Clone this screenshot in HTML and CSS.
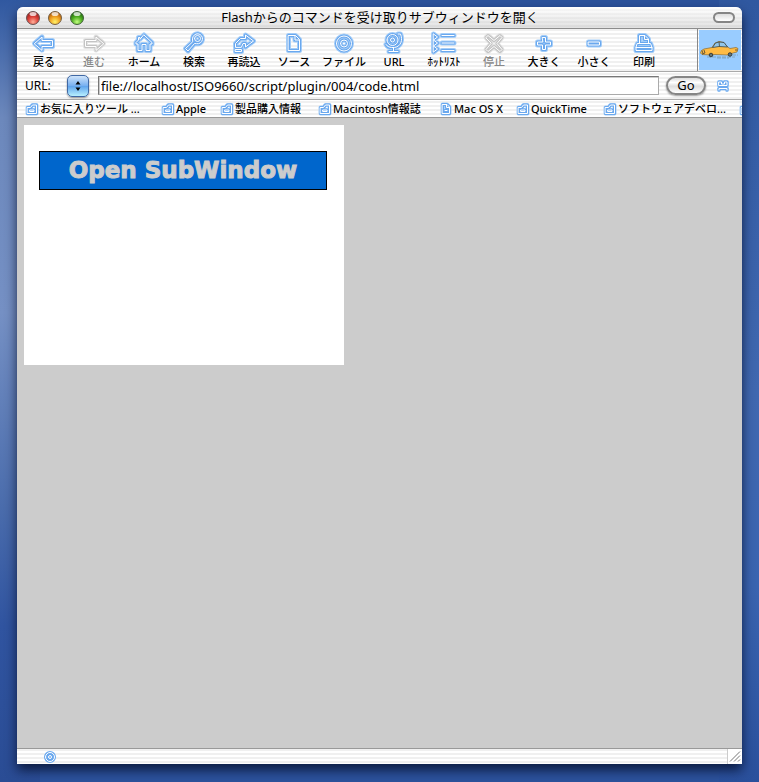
FILE: index.html
```html
<!DOCTYPE html>
<html lang="ja">
<head>
<meta charset="utf-8">
<title>Flashからのコマンドを受け取りサブウィンドウを開く</title>
<link rel="stylesheet" href="styles.css">
</head>
<body>
<svg class="defs" aria-hidden="true">
  <defs>
    <path id="s-back" d="M2.500 11.500L10 5V8.500H20.500V14.500H10V18Z"/>
    <path id="s-forward" d="M21.500 11.500L14 5V8.500H3.500V14.500H14V18Z"/>
    <path id="s-home" d="M12 3L20 10.500V12H18V18.500H14V12.500H10V18.500H6V12H4V10.500L6.500 8V5.500H8V7Z"/>
    <path id="s-search" d="M10.500 6.500a5 5 0 1 1 4 5.200L12.500 11.500L6 19L3.500 16.500L10.500 10ZM12.500 6.500a3 3 0 1 0 6 0a3 3 0 1 0-6 0"/>
    <path id="s-reload" d="M3.500 15V11.500L8.500 6.500H13.500V3L21.500 9L13.500 15V11.500H11L9.500 15ZM3.500 17.500H9.500V19.500H3.500Z"/>
    <path id="s-source" d="M6.500 3.500H13.500L17.500 7.500V18.500H6.500ZM13 3.500V8H17.500"/>
    <path id="s-target" d="M4.500 11.500a7.500 7.500 0 1 0 15 0a7.500 7.500 0 1 0-15 0M8.500 11.500a3.500 3.500 0 1 0 7 0a3.500 3.500 0 1 0-7 0"/>
    <path id="s-globe" d="M5 8a5.500 5.500 0 1 0 11 0a5.500 5.500 0 1 0-11 0M8.500 8a2 2 0 1 0 4 0a2 2 0 1 0-4 0M16 2H18.500C21 8 19 14.500 12.500 15.500C8 16 5 14.500 4 12.500M11.500 16V19M7 19.500H16"/>
    <path id="s-list" d="M1.500 2L5.500 5L1.500 8L5.500 11L1.500 14L5.500 17L1.500 20ZM10 3.500H22M10 11H22M10 18.500H22"/>
    <path id="s-stop" d="M4 5.500L6 3.500L12 8.500L18 3.500L20 5.500L15 11.500L20 17.500L18 19.500L12 14.500L6 19.500L4 17.500L9 11.500Z"/>
    <path id="s-plus" d="M10.500 5.500H13.500V10H18.500V13H13.500V17.500H10.500V13H5.500V10H10.500Z"/>
    <path id="s-minus" d="M6.500 10H17.500V13H6.500Z"/>
    <path id="s-print" d="M7.500 11.500V3.500H13L16.500 7V11.500M12.500 4V7.500H16.500M5.500 11.500H18.500L20 15.500V18.500H4V15.500ZM4 15.500H20"/>
    <path id="s-folder" d="M1.500 4.500H4.500L6.500 2H10.500V10.500H1.500ZM4 7H8V8.500H4Z"/>
    <path id="s-page" d="M2.500 1.500H7L9.500 4V10.500H2.500ZM6.500 2V4.500H9M5 7.500H7"/>
    <path id="s-ring" d="M1.500 6a4.500 4.500 0 1 0 9 0a4.500 4.500 0 1 0-9 0M4.500 6a1.500 1.500 0 1 0 3 0a1.500 1.500 0 1 0-3 0"/>
    <path id="s-knot" d="M2 2H4.500V4H7.500V2H10V5.500H2ZM2 10V8.500H10V10"/>
    <radialGradient id="g-red" cx=".5" cy=".8" r=".8"><stop offset="0" stop-color="#ffb09a"/><stop offset=".5" stop-color="#dc4038"/><stop offset="1" stop-color="#8a1818"/></radialGradient>
    <radialGradient id="g-amber" cx=".5" cy=".8" r=".8"><stop offset="0" stop-color="#fff36a"/><stop offset=".5" stop-color="#f0a020"/><stop offset="1" stop-color="#a04a08"/></radialGradient>
    <radialGradient id="g-green" cx=".5" cy=".8" r=".8"><stop offset="0" stop-color="#c2ff80"/><stop offset=".5" stop-color="#4ead20"/><stop offset="1" stop-color="#165c0c"/></radialGradient>
  </defs>
</svg>
<main class="window">
  <header class="titlebar">
    <div class="lights">
      <button class="light" aria-label="閉じる"><svg viewBox="0 0 16 16"><circle cx="8" cy="8" r="6.500" fill="url(#g-red)" stroke="#685454"/><ellipse cx="8" cy="4" rx="3.500" ry="2" fill="#fff" opacity=".75"/></svg></button>
      <button class="light" aria-label="しまう"><svg viewBox="0 0 16 16"><circle cx="8" cy="8" r="6.500" fill="url(#g-amber)" stroke="#756044"/><ellipse cx="8" cy="4" rx="3.500" ry="2" fill="#fff" opacity=".75"/></svg></button>
      <button class="light" aria-label="拡大"><svg viewBox="0 0 16 16"><circle cx="8" cy="8" r="6.500" fill="url(#g-green)" stroke="#42613a"/><ellipse cx="8" cy="4" rx="3.500" ry="2" fill="#fff" opacity=".75"/></svg></button>
    </div>
    <h1 class="title">Flashからのコマンドを受け取りサブウィンドウを開く</h1>
    <button class="pill" aria-label="ツールバー"></button>
  </header>

  <nav class="toolbar">
    <div class="tools">
      <button class="tool"><svg class="icon" viewBox="0 0 24 23"><use class="halo" href="#s-back"/><use class="edge" href="#s-back"/><use class="line" href="#s-back"/></svg>戻る</button>
      <button class="tool" disabled><svg class="icon" viewBox="0 0 24 23"><use class="halo" href="#s-forward"/><use class="edge" href="#s-forward"/><use class="line" href="#s-forward"/></svg>進む</button>
      <button class="tool"><svg class="icon" viewBox="0 0 24 23"><use class="halo" href="#s-home"/><use class="edge" href="#s-home"/><use class="line" href="#s-home"/></svg>ホーム</button>
      <button class="tool"><svg class="icon" viewBox="0 0 24 23"><use class="halo" href="#s-search"/><use class="edge" href="#s-search"/><use class="line" href="#s-search"/></svg>検索</button>
      <button class="tool"><svg class="icon" viewBox="0 0 24 23"><use class="halo" href="#s-reload"/><use class="edge" href="#s-reload"/><use class="line" href="#s-reload"/></svg>再読込</button>
      <button class="tool"><svg class="icon" viewBox="0 0 24 23"><use class="halo" href="#s-source"/><use class="edge" href="#s-source"/><use class="line" href="#s-source"/></svg>ソース</button>
      <button class="tool"><svg class="icon" viewBox="0 0 24 23"><use class="halo" href="#s-target"/><use class="edge" href="#s-target"/><use class="line" href="#s-target"/></svg>ファイル</button>
      <button class="tool"><svg class="icon" viewBox="0 0 24 23"><use class="halo" href="#s-globe"/><use class="edge" href="#s-globe"/><use class="line" href="#s-globe"/></svg>URL</button>
      <button class="tool"><svg class="icon" viewBox="0 0 24 23"><use class="halo" href="#s-list"/><use class="edge" href="#s-list"/><use class="line" href="#s-list"/></svg>ﾎｯﾄﾘｽﾄ</button>
      <button class="tool" disabled><svg class="icon" viewBox="0 0 24 23"><use class="halo" href="#s-stop"/><use class="edge" href="#s-stop"/><use class="line" href="#s-stop"/></svg>停止</button>
      <button class="tool"><svg class="icon" viewBox="0 0 24 23"><use class="halo" href="#s-plus"/><use class="edge" href="#s-plus"/><use class="line" href="#s-plus"/></svg>大きく</button>
      <button class="tool"><svg class="icon" viewBox="0 0 24 23"><use class="halo" href="#s-minus"/><use class="edge" href="#s-minus"/><use class="line" href="#s-minus"/></svg>小さく</button>
      <button class="tool"><svg class="icon" viewBox="0 0 24 23"><use class="halo" href="#s-print"/><use class="edge" href="#s-print"/><use class="line" href="#s-print"/></svg>印刷</button>
    </div>
    <div class="brand">
      <svg viewBox="0 0 42 40" aria-hidden="true">
        <path d="M8 27H36M18 28H30M33 25H39" stroke="#7897a8" stroke-width=".7" stroke-dasharray="4 1" fill="none"/>
        <path d="M1.500 23L2.500 20.500L5 19L13 17.500L16 13L20 11.500L25 12.500L28.500 17L31 18.500L37 17.500L39 18.500L38 22L34 23L29 25L16 24.500L12 25L3 24.500Z" fill="#ffbb44" stroke="#8d6a2c" stroke-width=".7"/>
        <path d="M13.500 17.500L16.500 13L20 12L25 12.500L28.500 17L20 16.500Z" fill="#92c6ea" stroke="#26363c" stroke-width=".7"/>
        <path d="M20 12L20.500 16.500M3 20.500L4 23.500M5 20L6 23L3 24M36 20H38.500" fill="none" stroke="#4a4434" stroke-width=".8"/>
        <circle cx="12" cy="25" r="1.800" fill="#657676" stroke="#24282a" stroke-width=".8"/>
        <circle cx="31" cy="24.500" r="1.800" fill="#657676" stroke="#24282a" stroke-width=".8"/>
      </svg>
    </div>
  </nav>

  <form class="address">
    <label class="address-label" for="url">URL:</label>
    <span class="popup">
      <select class="popup-select" aria-label="履歴"><option></option></select>
      <svg class="popup-arrows" viewBox="0 0 8 12" aria-hidden="true"><path d="M4 1L6.500 4.500H1.500ZM4 11L1.500 7.500H6.500Z"/></svg>
    </span>
    <input class="address-input" id="url" type="text" value="file://localhost/ISO9660/script/plugin/004/code.html">
    <button class="go" type="button">Go</button>
    <svg class="mini" viewBox="0 0 12 12" aria-hidden="true"><use class="halo" href="#s-knot"/><use class="edge" href="#s-knot"/><use class="line" href="#s-knot"/></svg>
  </form>

  <nav class="bookmarks">
    <a class="bookmark" href="#"><svg class="mini" viewBox="0 0 12 12"><use class="halo" href="#s-folder"/><use class="edge" href="#s-folder"/><use class="line" href="#s-folder"/></svg>お気に入りツール ...</a>
    <a class="bookmark" href="#"><svg class="mini" viewBox="0 0 12 12"><use class="halo" href="#s-folder"/><use class="edge" href="#s-folder"/><use class="line" href="#s-folder"/></svg>Apple</a>
    <a class="bookmark" href="#"><svg class="mini" viewBox="0 0 12 12"><use class="halo" href="#s-folder"/><use class="edge" href="#s-folder"/><use class="line" href="#s-folder"/></svg>製品購入情報</a>
    <a class="bookmark" href="#"><svg class="mini" viewBox="0 0 12 12"><use class="halo" href="#s-folder"/><use class="edge" href="#s-folder"/><use class="line" href="#s-folder"/></svg>Macintosh情報誌</a>
    <a class="bookmark" href="#"><svg class="mini" viewBox="0 0 12 12"><use class="halo" href="#s-page"/><use class="edge" href="#s-page"/><use class="line" href="#s-page"/></svg>Mac OS X</a>
    <a class="bookmark" href="#"><svg class="mini" viewBox="0 0 12 12"><use class="halo" href="#s-folder"/><use class="edge" href="#s-folder"/><use class="line" href="#s-folder"/></svg>QuickTime</a>
    <a class="bookmark" href="#"><svg class="mini" viewBox="0 0 12 12"><use class="halo" href="#s-folder"/><use class="edge" href="#s-folder"/><use class="line" href="#s-folder"/></svg>ソフトウェアデベロ...</a>
    <a class="bookmark" href="#" aria-label="次"><svg class="mini" viewBox="0 0 12 12"><use class="halo" href="#s-folder"/><use class="edge" href="#s-folder"/><use class="line" href="#s-folder"/></svg></a>
  </nav>

  <section class="content">
    <div class="movie">
      <button class="open">Open SubWindow</button>
    </div>
  </section>

  <footer class="status">
    <svg class="mini" viewBox="0 0 12 12" aria-hidden="true"><use class="edge" href="#s-ring"/><use class="line" href="#s-ring"/></svg>
    <svg class="grip" viewBox="0 0 14 14" aria-hidden="true"><path d="M2 12L12 2M6 12L12 6M10 12L12 10"/></svg>
  </footer>
</main>
</body>
</html>
```
FILE: styles.css
```css
* {
  box-sizing: border-box;
}

body {
  margin: 0;
  min-height: 100vh;
  display: flex;
  padding: 7px 17px 18px;
  font-family: "Noto Sans", "Noto Sans CJK JP", sans-serif;
  font-size: 11px;
  color: #000;
  background:
    linear-gradient(#3058a0, #3860a8 25%, #4068b0 50%, #3a64b0 75%, #2a509c) right / 40px 100% no-repeat,
    linear-gradient(#3058a0, #6c88bc 15%, #7590c4 40%, #4a6cac 65%, #3054a0 80%, #2a4c94) left / 40px 100% no-repeat,
    #2c529c;
}

button {
  font: inherit;
  color: inherit;
  padding: 0;
  border: 0;
  background: none;
}

.defs {
  position: absolute;
  width: 0;
  height: 0;
}

.window {
  flex: 1;
  min-width: 0;
  display: flex;
  flex-direction: column;
  border-radius: 6px 6px 0 0;
  overflow: hidden;
  background: repeating-linear-gradient(#fff 0 2px, #f0f0f0 2px 4px);
  box-shadow: 0 6px 12px rgba(0, 8, 32, .75);
}

.titlebar {
  display: grid;
  grid-template-columns: 80px 1fr 80px;
  align-items: center;
  height: 22px;
  padding: 0 7px 0 8px;
  border-bottom: 1px solid #8c8c8c;
  background: linear-gradient(rgba(255, 255, 255, .6), rgba(190, 190, 190, .45));
}

.lights {
  display: flex;
  gap: 6px;
}

.light,
.light svg {
  display: block;
  width: 16px;
  height: 16px;
}

.title {
  margin: 0;
  padding-bottom: 2px;
  text-align: center;
  white-space: nowrap;
  font-size: 13px;
  font-weight: 400;
  line-height: 18px;
}

.pill {
  justify-self: end;
  width: 22px;
  height: 11px;
  border: 2px solid #858585;
  border-radius: 6px;
  background: linear-gradient(#ddd, #fff);
}

.toolbar {
  display: flex;
  justify-content: space-between;
  height: 43px;
  border-bottom: 1px solid #aaa;
}

.tools {
  display: flex;
  padding-left: 2px;
}

.tool {
  display: flex;
  flex-direction: column;
  align-items: center;
  width: 50px;
  padding-top: 3px;
  line-height: 13px;
  font-weight: 500;
  white-space: nowrap;
}

.tool:disabled {
  color: #888;
}

.icon {
  width: 24px;
  height: 23px;
  overflow: visible;
}

.mini {
  flex: none;
  width: 12px;
  height: 12px;
  overflow: visible;
}

.halo,
.edge,
.line {
  fill: none;
  stroke-linejoin: round;
  stroke-linecap: round;
}

.halo {
  stroke: #a4cdf8;
  stroke-width: 5;
}

.edge {
  stroke: #6aa8ee;
  stroke-width: 3;
}

.line {
  stroke: #fff;
  stroke-width: 1;
}

.mini .halo {
  stroke-width: 4;
}

.tool:disabled .halo {
  stroke: #e4e4e4;
}

.tool:disabled .edge {
  stroke: #c4c4c4;
}

.brand {
  flex: none;
  padding: 1px;
  border-left: 1px solid #888;
}

.brand svg {
  display: block;
  width: 42px;
  height: 40px;
  background: #99ccff;
}

.address {
  display: flex;
  align-items: center;
  height: 28px;
  padding: 0 13px 0 8px;
  border-bottom: 1px solid #aaa;
}

.address-label {
  width: 42px;
  font-size: 12px;
}

.popup {
  position: relative;
  width: 22px;
  height: 22px;
  margin-right: 9px;
}

.popup-select {
  display: block;
  width: 22px;
  height: 22px;
  appearance: none;
  border: 1px solid #4068a4;
  border-radius: 5px;
  background: linear-gradient(#d0e4fa, #78b0f0 48%, #5ea2ec 50%, #b8f0ff);
  box-shadow: 0 1px 2px rgba(0, 0, 0, .4);
}

.popup-arrows {
  position: absolute;
  inset: 5px 7px;
  width: 8px;
  height: 12px;
  pointer-events: none;
}

.address-input {
  flex: 1;
  min-width: 0;
  height: 19px;
  padding: 0 2px;
  border: 1px solid #aaa;
  border-top-color: #777;
  border-left-color: #777;
  border-radius: 0;
  background: #fff;
  font: inherit;
  font-size: 13px;
  box-shadow: inset 1px 1px #ccc;
}

.go {
  width: 40px;
  height: 19px;
  margin: 0 11px 0 7px;
  border: 2px solid #858585;
  border-radius: 10px;
  font-size: 13px;
  line-height: 15px;
  background: linear-gradient(#ddd, #fff 30%, #dedede 55%, #fff);
  box-shadow: 0 1px 2px rgba(0, 0, 0, .4);
}

.bookmarks {
  display: grid;
  grid-template-columns: 136px 59px 98px 121px 77px 87px 136px 12px;
  align-items: center;
  height: 18px;
  padding-left: 9px;
  border-bottom: 1px solid #999;
  overflow: hidden;
}

.bookmark {
  display: flex;
  align-items: center;
  gap: 2px;
  color: inherit;
  font-weight: 500;
  line-height: 16px;
  text-decoration: none;
  white-space: nowrap;
}

.content {
  flex: 1;
  padding: 7px;
  background: #ccc;
}

.movie {
  width: 320px;
  height: 240px;
  padding: 26px 15px;
  background: #fff;
}

.open {
  display: block;
  width: 288px;
  height: 39px;
  padding-bottom: 2px;
  border: 1px solid #000;
  background: #0066cc;
  color: #ccc;
  font-family: "DejaVu Sans", sans-serif;
  font-size: 23px;
  font-weight: 700;
  -webkit-text-stroke: 1px #ccc;
}

.status {
  display: flex;
  align-items: center;
  justify-content: space-between;
  height: 16px;
  padding-left: 27px;
  border-top: 1px solid #999;
}

.grip {
  width: 15px;
  height: 15px;
  border-left: 1px solid #ccc;
  background: #fff;
  fill: none;
  stroke: #777;
}
```
